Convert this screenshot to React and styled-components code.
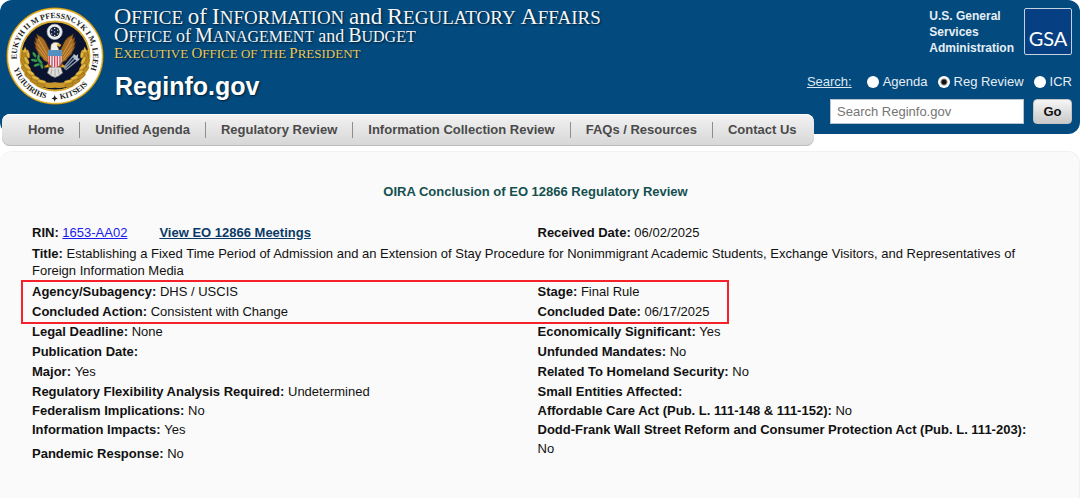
import React, { useState } from 'react';
import styled, { createGlobalStyle } from 'styled-components';

const GlobalStyle = createGlobalStyle`
  * {
    box-sizing: border-box;
  }
  body {
    margin: 0;
    background: #fff;
    color: #111;
    font-family: 'Liberation Sans', Arial, sans-serif;
    font-size: 13px;
  }
`;

const Header = styled.header`
  display: flex;
  justify-content: space-between;
  padding: 7px 8px 10px 6px;
  border-radius: 12px;
  background: #034a7e;
  color: #fff;
`;

const Brand = styled.div`
  display: flex;
  gap: 10px;
`;

const Seal = styled.svg`
  flex: none;
  width: 98px;
  height: 98px;
`;

const Titles = styled.div`
  font-family: 'Liberation Serif', 'Times New Roman', serif;
  text-shadow: 1px 1px 2px rgba(0, 0, 0, 0.6);
  white-space: nowrap;
`;

const Line = styled.div`
  height: ${(p) => p.$height}px;
  font-size: ${(p) => p.$size}px;
  line-height: 18px;
  color: ${(p) => p.$color || '#f4f6f8'};
`;

const Word = styled.span`
  display: inline-block;
  text-transform: uppercase;
  &::first-letter {
    font-size: ${(p) => p.$cap}px;
  }
`;

const Joiner = styled.span`
  font-size: ${(p) => p.$size}px;
`;

const SiteName = styled.h1`
  margin: 9px 0 0;
  padding-left: 1px;
  font-family: 'Liberation Sans', Arial, sans-serif;
  font-size: 25px;
  line-height: 30px;
`;

const Tools = styled.div`
  display: flex;
  flex-direction: column;
  align-items: flex-end;
`;

const Agency = styled.a`
  display: flex;
  gap: 10px;
  padding-top: 1px;
  color: #e6eef5;
  font-size: 12px;
  font-weight: bold;
  line-height: 16px;
  text-decoration: none;
`;

const GsaMark = styled.span`
  display: flex;
  align-items: flex-end;
  justify-content: center;
  width: 48px;
  height: 47px;
  padding-bottom: 6px;
  border: 1px solid #c3d3e4;
  border-radius: 2px;
  background: #063f82;
  color: #fff;
  font-family: Lato, sans-serif;
  font-size: 20px;
  font-weight: 400;
  line-height: 20px;
`;

const SearchForm = styled.form`
  display: flex;
  flex-direction: column;
  align-items: flex-end;
`;

const Scopes = styled.div`
  display: flex;
  align-items: center;
  gap: 10px;
  padding: 17px 0 9px;
  line-height: 17px;
`;

const SearchLabel = styled.label`
  margin-right: 5px;
  color: #dce8f2;
  text-decoration: underline;
`;

const Scope = styled.label`
  display: flex;
  align-items: center;
  gap: 4px;
  color: #e6eef5;
`;

const Radio = styled.input`
  appearance: none;
  width: 12px;
  height: 12px;
  margin: 0;
  border-radius: 50%;
  background: #fff;
  &:checked {
    background: radial-gradient(circle, #111 2px, #fff 4px);
  }
`;

const SearchRow = styled.div`
  display: flex;
  gap: 9px;
`;

const SearchBox = styled.input`
  width: 194px;
  height: 25px;
  padding: 0 6px;
  border: 1px solid #b4c4d2;
  background: #fff;
  font-family: inherit;
  font-size: 13px;
  &::placeholder {
    color: #757575;
    opacity: 1;
  }
`;

const GoButton = styled.button`
  width: 39px;
  height: 25px;
  padding: 0;
  border: 1px solid #c4c4c4;
  border-radius: 4px;
  background: linear-gradient(#f6f6f6, #c9c9c9);
  color: #111;
  font-family: inherit;
  font-size: 13px;
  font-weight: bold;
`;

const Nav = styled.nav`
  position: relative;
  width: fit-content;
  margin: -20px 0 5px 2px;
  padding: 0 2px 0 11px;
  border-radius: 8px;
  background: linear-gradient(#f3f3f3, #d6d6d6);
  box-shadow: inset 0 -1px 0 #bdbdbd, inset 0 1px 0 #fff;
`;

const NavList = styled.ul`
  display: flex;
  align-items: center;
  height: 32px;
  margin: 0;
  padding: 0;
  list-style: none;
`;

const NavItem = styled.li`
  padding: 0 15px;
  line-height: 16px;
  & + & {
    border-left: 1px solid #8e8e8e;
  }
`;

const NavLink = styled.a`
  color: #4a4a4a;
  font-weight: bold;
  text-decoration: none;
`;

const Panel = styled.main`
  min-height: calc(100vh - 151px);
  padding: 30px 40px 30px 32px;
  border: 1px solid #f1f1f1;
  border-width: 1px 1px 0 0;
  border-radius: 12px 12px 0 0;
  background: #fafafa;
`;

const PageTitle = styled.h2`
  margin: 0 0 21px;
  color: #14504f;
  font-size: 13px;
  line-height: 20px;
  text-align: center;
`;

const Columns = styled.div`
  position: relative;
  display: grid;
  grid-template-columns: 1fr 1fr;
  column-gap: 4px;
`;

// red frame drawn over the agency / conclusion rows
const Highlight = styled(Columns)`
  &::after {
    content: '';
    position: absolute;
    inset: 0 31% 0 -9px;
    outline: 2px solid #f5222a;
    pointer-events: none;
  }
`;

const Fields = styled.dl`
  margin: 0;
`;

const FieldRow = styled.div`
  margin-top: ${(p) => (p.$spaced ? 5 : 0)}px;
  line-height: ${(p) => p.$height || 20}px;
`;

const Term = styled.dt`
  display: inline;
  font-weight: bold;
`;

const Value = styled.dd`
  display: inline;
  margin: 0;
`;

const TitleBlock = styled(Fields)`
  margin: 2px 0 3px;
`;

const RinLink = styled.a`
  margin-right: 32px;
  color: #1a1aee;
`;

const MeetingsLink = styled.a`
  color: #0b3a68;
  font-weight: bold;
`;

const navItems = [
  'Home',
  'Unified Agenda',
  'Regulatory Review',
  'Information Collection Review',
  'FAQs / Resources',
  'Contact Us'
];

const leftFields = [
  { term: 'Legal Deadline', value: 'None' },
  { term: 'Publication Date', value: '' },
  { term: 'Major', value: 'Yes' },
  { term: 'Regulatory Flexibility Analysis Required', value: 'Undetermined', height: 19 },
  { term: 'Federalism Implications', value: 'No', height: 19 },
  { term: 'Information Impacts', value: 'Yes', height: 19 },
  { term: 'Pandemic Response', value: 'No', height: 19, spaced: true }
];

const rightFields = [
  { term: 'Economically Significant', value: 'Yes' },
  { term: 'Unfunded Mandates', value: 'No' },
  { term: 'Related To Homeland Security', value: 'No' },
  { term: 'Small Entities Affected', value: '', height: 19 },
  { term: 'Affordable Care Act (Pub. L. 111-148 & 111-152)', value: 'No', height: 19 },
  {
    term: 'Dodd-Frank Wall Street Reform and Consumer Protection Act (Pub. L. 111-203)',
    value: 'No',
    height: 19
  }
];

const Field = ({ term, value, height, spaced }) => (
  <FieldRow $height={height} $spaced={spaced}>
    <Term>{term}:</Term> <Value>{value}</Value>
  </FieldRow>
);

const leaves = [
  [74, 163, 78], [71, 184, 62], [74, 205, 44], [85, 224, 32], [101, 240, 22], [121, 251, 10]
];

const EagleSeal = () => (
  <Seal viewBox="14 20 296 296" role="img" aria-label="Seal">
    <defs>
      <path id="ringTop" d="M47 178 A115 115 0 1 1 270 207" />
      <path id="ringLowLeft" d="M37 206 A131 131 0 0 0 148 298" />
      <path id="ringLowRight" d="M178 298 A131 131 0 0 0 282 221" />
    </defs>
    <circle cx="162" cy="168" r="144" fill="#fff" stroke="#e3b229" strokeWidth="5" />
    <circle cx="162" cy="168" r="147" fill="none" stroke="#4b3a12" strokeWidth="1" />
    <circle cx="162" cy="168" r="104" fill="#0a1430" stroke="#d9ab2f" strokeWidth="6" />
    <g fill="#1d1d20" fontFamily="Liberation Serif, serif" fontSize="24" fontWeight="bold">
      <text>
        <textPath href="#ringTop">EUKYH II M PFESSNCYK I M, LEEH</textPath>
      </text>
      <text>
        <textPath href="#ringLowLeft">YIUIUIRIHS</textPath>
      </text>
      <text>
        <textPath href="#ringLowRight">KITSEIS</textPath>
      </text>
    </g>
    <path d="M161 286 l3 7 7 3 -7 3 -3 7 -3 -7 -7 -3 7 -3z" fill="#1d1d20" />

    {/* wheat wreath */}
    <g stroke="#7c5812" strokeWidth="1">
      <path
        d="M70 150 Q62 205 104 240 Q133 262 162 255 Q194 262 222 238 Q260 205 253 150"
        fill="none"
        stroke="#c8962a"
        strokeWidth="16"
      />
      {leaves.map(([x, y, angle]) => (
        <g key={`l${x}-${y}`} transform={`rotate(${angle} ${x} ${y})`}>
          <ellipse cx={x} cy={y - 6} rx="13" ry="5" fill="#e5b93e" />
          <ellipse cx={x} cy={y + 6} rx="13" ry="5" fill="#bd8a22" />
        </g>
      ))}
      {leaves.map(([x, y, angle]) => (
        <g key={`r${x}-${y}`} transform={`rotate(${-angle} ${324 - x} ${y})`}>
          <ellipse cx={324 - x} cy={y - 6} rx="13" ry="5" fill="#e5b93e" />
          <ellipse cx={324 - x} cy={y + 6} rx="13" ry="5" fill="#bd8a22" />
        </g>
      ))}
      <path d="M72 140 l-9 18 16 0z M252 140 l-8 18 16 0z" fill="#e5b93e" />
    </g>

    {/* cloud of stars */}
    <circle cx="161" cy="95" r="23" fill="#eef0ee" stroke="#b9bdc2" strokeWidth="2" />
    <circle cx="161" cy="95" r="15" fill="#17233c" />
    <g fill="#dfe5ec">
      {[[161, 85], [152, 90], [170, 90], [161, 95], [152, 101], [170, 101], [161, 106]].map(([x, y]) => (
        <circle key={`${x}-${y}`} cx={x} cy={y} r="2" />
      ))}
    </g>

    {/* eagle */}
    <path
      d="M147 151 C137 140 136 116 114 107 L107 102 L109 117 L102 111 L105 128 L99 124 L105 142 L101 140 L111 158 L110 160 L124 174 L127 180 L144 190z"
      fill="#a66b24"
      stroke="#52330e"
      strokeWidth="2"
    />
    <path
      d="M177 151 C187 140 188 116 210 107 L217 102 L215 117 L222 111 L219 128 L225 124 L219 142 L223 140 L213 158 L214 160 L200 174 L197 180 L180 190z"
      fill="#a66b24"
      stroke="#52330e"
      strokeWidth="2"
    />
    <path
      d="M112 116 L139 164 M110 132 L138 174 M112 148 L138 182 M212 116 L185 164 M214 132 L186 174 M212 148 L186 182"
      fill="none"
      stroke="#d49a47"
      strokeWidth="3"
    />
    <path d="M142 188 L128 206 L143 202 L147 217 L162 222 L177 217 L181 202 L196 206 L182 188z" fill="#8d5a1f" />
    <path d="M145 202 L139 219 L150 228 L162 233 L174 228 L185 219 L179 202z" fill="#dedfdd" stroke="#82807b" strokeWidth="2" />
    <path d="M153 207 L149 226 M162 207 L162 230 M171 207 L175 226" stroke="#8f8c86" strokeWidth="2" />
    <path d="M148 153 L150 133 Q158 123 171 127 L179 134 L169 137 L176 153z" fill="#f0efe9" stroke="#65533a" strokeWidth="2" />
    <path d="M169 130 L181 134 L177 141 L168 137z" fill="#e8b22b" />
    <path d="M142 151 H182 V184 Q181 197 162 204 Q143 197 142 184z" fill="#eceff2" />
    <path d="M145 168 V192 M153 168 V199 M161 168 V203 M169 168 V201 M177 168 V196" stroke="#d6475b" strokeWidth="4" />
    <path d="M141 150 H183 V168 H141z" fill="#548fc1" />

    {/* olive branch and arrows */}
    <g fill="#3c9a4c">
      <ellipse cx="100" cy="164" rx="9" ry="4" transform="rotate(55 100 164)" />
      <ellipse cx="112" cy="172" rx="9" ry="4" transform="rotate(95 112 172)" />
      <ellipse cx="99" cy="181" rx="10" ry="4" transform="rotate(15 99 181)" />
      <ellipse cx="117" cy="184" rx="10" ry="4" transform="rotate(50 117 184)" />
      <ellipse cx="107" cy="195" rx="10" ry="4" transform="rotate(-18 107 195)" />
      <ellipse cx="122" cy="199" rx="8" ry="4" transform="rotate(70 122 199)" />
    </g>
    <path d="M98 166 Q108 188 134 199" fill="none" stroke="#276b33" strokeWidth="2" />
    <path d="M190 207 L229 168 M188 203 L220 165 M194 210 L233 179" stroke="#8b9cae" strokeWidth="4" />
    <path d="M216 172 L219 162 L226 167 L232 162 L231 174 L238 177 L227 183z" fill="#b6c3d1" />
    <path d="M128 200 L141 194 L143 202z M196 200 L184 194 L181 202z" fill="#e0a92d" />
  </Seal>
);

const App = () => {
  const [scope, setScope] = useState('Reg Review');
  const [query, setQuery] = useState('');

  return (
    <>
      <GlobalStyle />
      <Header>
        <Brand>
          <EagleSeal />
          <Titles>
            <Line $size={19} $height={19}>
              <Word $cap={24}>Office</Word> <Joiner $size={23}>of</Joiner> <Word $cap={24}>Information</Word>{' '}
              <Joiner $size={23}>and</Joiner> <Word $cap={24}>Regulatory</Word> <Word $cap={24}>Affairs</Word>
            </Line>
            <Line $size={16} $height={18}>
              <Word $cap={20}>Office</Word> <Joiner $size={18}>of</Joiner> <Word $cap={20}>Management</Word>{' '}
              <Joiner $size={18}>and</Joiner> <Word $cap={20}>Budget</Word>
            </Line>
            <Line $size={13} $height={18} $color="#e8c95c">
              <Word $cap={15}>Executive</Word> <Word $cap={15}>Office</Word> <Word $cap={13}>of</Word>{' '}
              <Word $cap={13}>the</Word> <Word $cap={15}>President</Word>
            </Line>
            <SiteName>Reginfo.gov</SiteName>
          </Titles>
        </Brand>
        <Tools>
          <Agency href="#gsa">
            <span>
              U.S. General
              <br />
              Services
              <br />
              Administration
            </span>
            <GsaMark>GSA</GsaMark>
          </Agency>
          <SearchForm onSubmit={(e) => e.preventDefault()}>
            <Scopes>
              <SearchLabel htmlFor="query">Search:</SearchLabel>
              {['Agenda', 'Reg Review', 'ICR'].map((name) => (
                <Scope key={name}>
                  <Radio
                    type="radio"
                    name="scope"
                    value={name}
                    checked={scope === name}
                    onChange={() => setScope(name)}
                  />
                  {name}
                </Scope>
              ))}
            </Scopes>
            <SearchRow>
              <SearchBox
                id="query"
                type="text"
                placeholder="Search Reginfo.gov"
                value={query}
                onChange={(e) => setQuery(e.target.value)}
              />
              <GoButton type="submit">Go</GoButton>
            </SearchRow>
          </SearchForm>
        </Tools>
      </Header>
      <Nav>
        <NavList>
          {navItems.map((item) => (
            <NavItem key={item}>
              <NavLink href="#nav">{item}</NavLink>
            </NavItem>
          ))}
        </NavList>
      </Nav>
      <Panel>
        <PageTitle>OIRA Conclusion of EO 12866 Regulatory Review</PageTitle>
        <Columns>
          <Fields>
            <FieldRow>
              <Term>RIN:</Term>{' '}
              <Value>
                <RinLink href="#rin">1653-AA02</RinLink>
                <MeetingsLink href="#meetings">View EO 12866 Meetings</MeetingsLink>
              </Value>
            </FieldRow>
          </Fields>
          <Fields>
            <Field term="Received Date" value="06/02/2025" />
          </Fields>
        </Columns>
        <TitleBlock>
          <Field
            term="Title"
            value="Establishing a Fixed Time Period of Admission and an Extension of Stay Procedure for Nonimmigrant Academic Students, Exchange Visitors, and Representatives of Foreign Information Media"
            height={17}
          />
        </TitleBlock>
        <Highlight>
          <Fields>
            <Field term="Agency/Subagency" value="DHS / USCIS" />
            <Field term="Concluded Action" value="Consistent with Change" />
          </Fields>
          <Fields>
            <Field term="Stage" value="Final Rule" />
            <Field term="Concluded Date" value="06/17/2025" />
          </Fields>
        </Highlight>
        <Columns>
          <Fields>
            {leftFields.map((field) => (
              <Field key={field.term} {...field} />
            ))}
          </Fields>
          <Fields>
            {rightFields.map((field) => (
              <Field key={field.term} {...field} />
            ))}
          </Fields>
        </Columns>
      </Panel>
    </>
  );
};

export default App;
